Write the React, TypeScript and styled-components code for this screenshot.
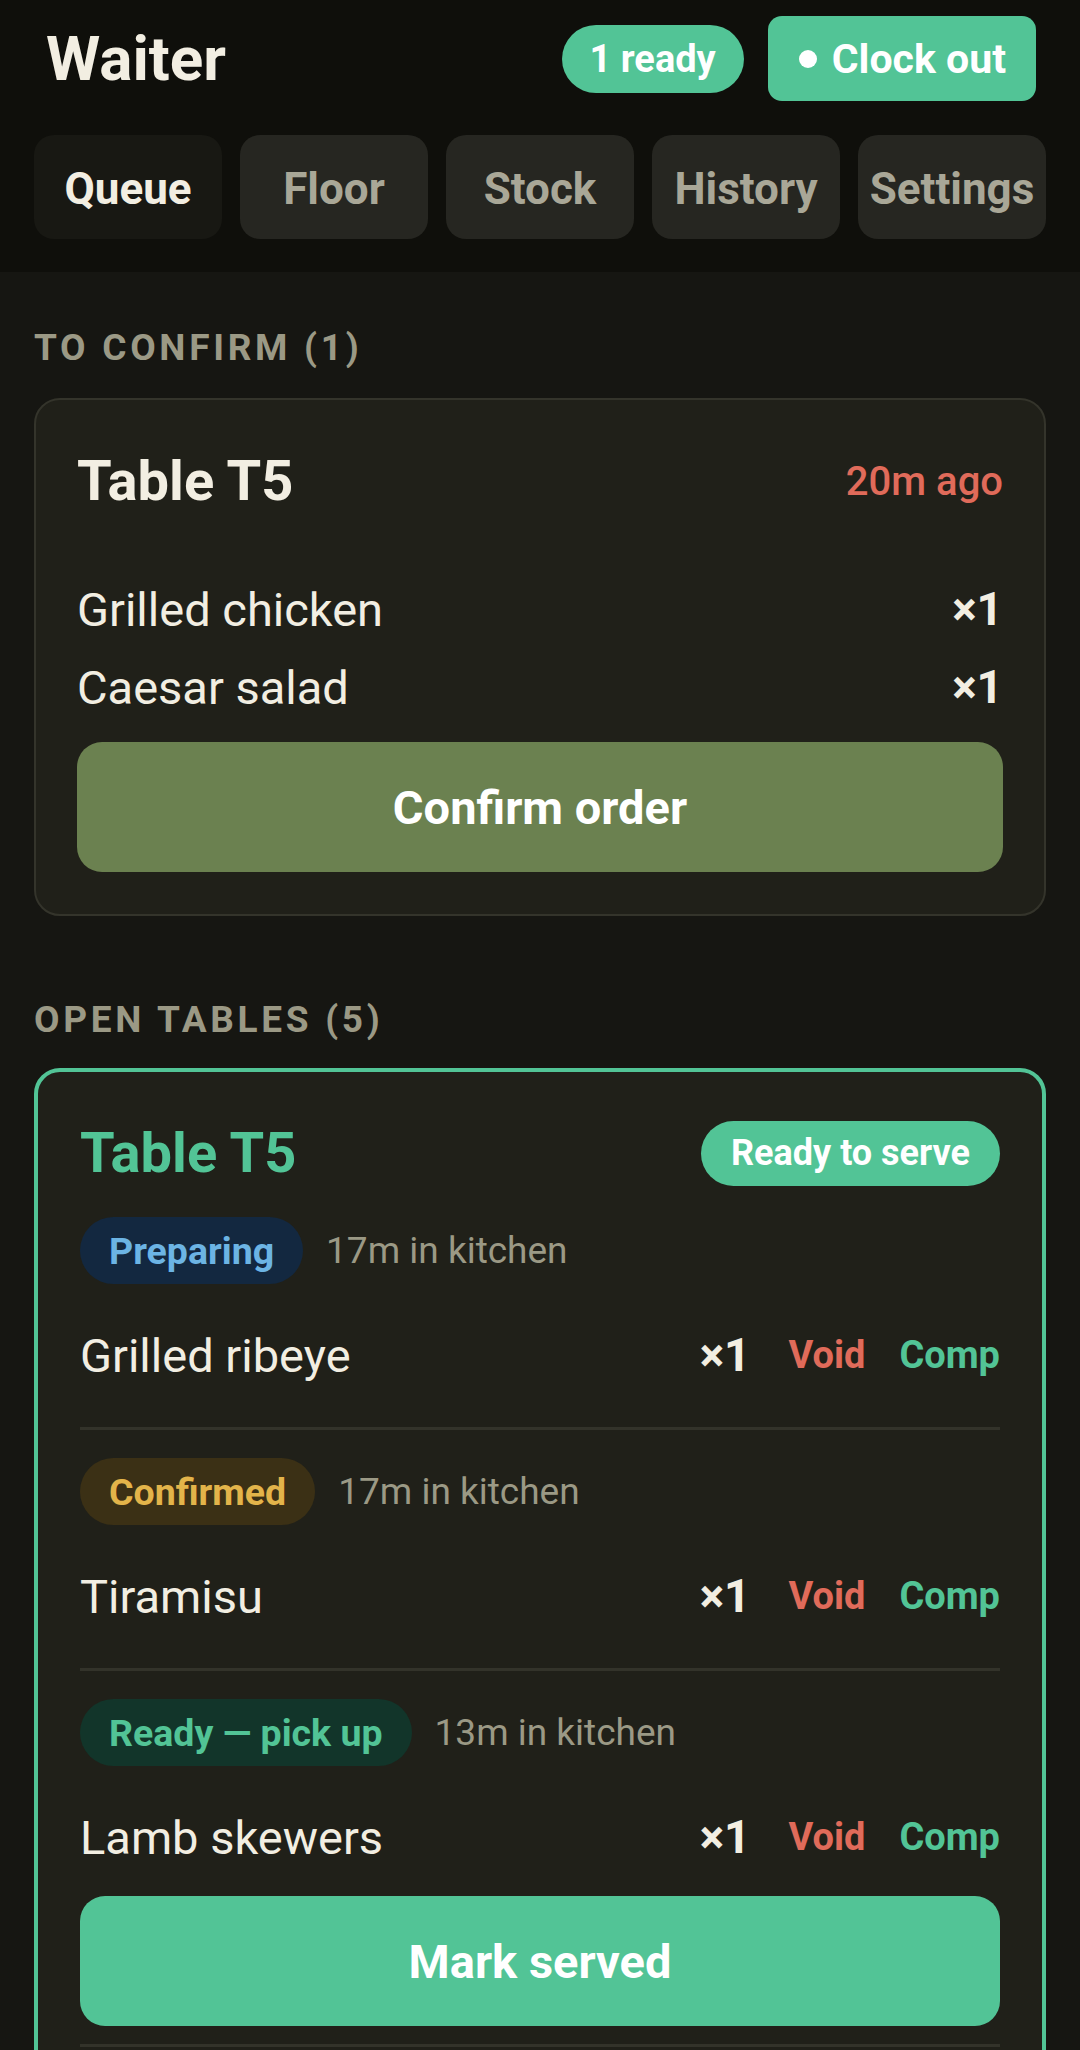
import React from 'react';
import styled, { createGlobalStyle } from 'styled-components';

// ========== Global ==========

const GlobalStyle = createGlobalStyle`
  html, body {
    margin: 0;
    padding: 0;
    background: #161612;
  }
  body {
    font-family: Roboto, "Liberation Sans", Arial, sans-serif;
    color: #f2eee2;
  }
  * {
    box-sizing: border-box;
  }
`;

// ========== Styled Components ==========

const Page = styled.div`
  width: 1080px;
  min-height: 2050px;
  background: #161612;
`;

const Header = styled.header`
  background: #0f0f0b;
  padding: 16px 34px 33px;
`;

const TitleRow = styled.div`
  display: flex;
  align-items: center;
  justify-content: space-between;
  height: 85px;
  padding: 0 10px 0 12px;
`;

const Title = styled.h1`
  margin: 0;
  font-size: 62px;
  font-weight: 700;
  color: #f2eee2;
`;

const HeaderActions = styled.div`
  display: flex;
  align-items: center;
  gap: 24px;
`;

const ReadyPill = styled.span`
  display: inline-flex;
  align-items: center;
  height: 68px;
  padding: 0 28px;
  border-radius: 34px;
  background: #52c496;
  color: #fff;
  font-size: 38px;
  font-weight: 700;
`;

const ClockOut = styled.button`
  display: inline-flex;
  align-items: center;
  gap: 15px;
  height: 85px;
  padding: 0 30px 0 31px;
  border: none;
  border-radius: 14px;
  background: #52c496;
  color: #fff;
  font-family: inherit;
  font-size: 41px;
  font-weight: 700;
`;

const Dot = styled.span`
  width: 18px;
  height: 18px;
  border-radius: 50%;
  background: #fff;
`;

const Tabs = styled.nav`
  display: grid;
  grid-template-columns: repeat(5, 1fr);
  gap: 18px;
  margin-top: 34px;
`;

const Tab = styled.button<{ $active?: boolean }>`
  height: 104px;
  border: none;
  border-radius: 20px;
  padding: 4px 0 0;
  background: ${(p) => (p.$active ? '#181813' : '#262621')};
  color: ${(p) => (p.$active ? '#f2eee2' : '#a9a797')};
  font-family: inherit;
  font-size: 44px;
  font-weight: 700;
  white-space: nowrap;
`;

const Main = styled.main`
  padding: 54px 34px 0;
`;

const SectionLabel = styled.h2<{ $spaced?: boolean }>`
  margin: ${(p) => (p.$spaced ? '82px' : '0')} 0 ${(p) => (p.$spaced ? '26px' : '28px')};
  font-size: 37px;
  line-height: 44px;
  font-weight: 700;
  letter-spacing: 0.1em;
  text-transform: uppercase;
  color: #9b9985;
`;

const Card = styled.section<{ $ready?: boolean }>`
  background: #202019;
  border: ${(p) => (p.$ready ? '4px solid #52c496' : '2px solid #34342b')};
  border-radius: 26px;
  padding: ${(p) => (p.$ready ? '46px 42px 0' : '41px 41px 42px')};
`;

const CardHead = styled.div<{ $h: number }>`
  display: flex;
  align-items: center;
  justify-content: space-between;
  height: ${(p) => p.$h}px;
`;

const TableName = styled.h3<{ $ready?: boolean }>`
  margin: 0;
  font-size: 56px;
  font-weight: 700;
  color: ${(p) => (p.$ready ? '#52c496' : '#f2eee2')};
`;

const Age = styled.span`
  font-size: 40px;
  font-weight: 500;
  color: #e06b5a;
`;

const ServePill = styled.span`
  display: inline-flex;
  align-items: center;
  height: 65px;
  padding: 0 30px;
  border-radius: 33px;
  background: #52c496;
  color: #fff;
  font-size: 36px;
  font-weight: 700;
`;

const ItemList = styled.div`
  margin-top: 49px;
`;

const ItemRow = styled.div<{ $h: number }>`
  display: flex;
  align-items: center;
  justify-content: space-between;
  height: ${(p) => p.$h}px;
  font-size: 47px;
  color: #f2eee2;
`;

const Qty = styled.span`
  font-weight: 700;
  font-size: 46px;
`;

const RowRight = styled.div`
  display: flex;
  align-items: center;
`;

const Action = styled.button<{ $kind: 'void' | 'comp' }>`
  border: none;
  background: none;
  padding: 0;
  margin-left: ${(p) => (p.$kind === 'void' ? '38px' : '34px')};
  font-family: inherit;
  font-size: 38px;
  font-weight: 700;
  color: ${(p) => (p.$kind === 'void' ? '#e06b5a' : '#52c496')};
`;

const BigButton = styled.button<{ $tone: 'olive' | 'green' }>`
  display: block;
  width: 100%;
  height: 130px;
  border: none;
  border-radius: 25px;
  background: ${(p) => (p.$tone === 'olive' ? '#6b8150' : '#52c496')};
  color: #fff;
  font-family: inherit;
  font-size: 47px;
  font-weight: 700;
`;

const Block = styled.div<{ $first?: boolean; $last?: boolean }>`
  padding: ${(p) => (p.$first ? '29px' : '28px')} 0 ${(p) => (p.$last ? '18px' : '44px')};
  border-bottom: 3px solid #33332a;
`;

const Meta = styled.div`
  display: flex;
  align-items: center;
  gap: 23px;
  height: 67px;
  margin-bottom: 43px;
`;

const statusColors = {
  preparing: { bg: '#132840', fg: '#6cb4e4' },
  confirmed: { bg: '#3b3015', fg: '#e3b44a' },
  ready: { bg: '#12352a', fg: '#52c496' },
};

type Status = keyof typeof statusColors;

const Badge = styled.span<{ $status: Status }>`
  display: inline-flex;
  align-items: center;
  height: 67px;
  padding: 0 29px;
  border-radius: 34px;
  background: ${(p) => statusColors[p.$status].bg};
  color: ${(p) => statusColors[p.$status].fg};
  font-size: 37.5px;
  font-weight: 700;
  white-space: nowrap;
`;

const MetaText = styled.span`
  font-size: 37px;
  color: #9b9985;
`;

const ButtonWrap = styled.div<{ $gap: number }>`
  margin-top: ${(p) => p.$gap}px;
`;

const Tail = styled.div`
  height: 200px;
`;

// ========== Data ==========

const toConfirm = [
  { name: 'Grilled chicken', qty: 1 },
  { name: 'Caesar salad', qty: 1 },
];

const openItems: { status: Status; label: string; time: string; name: string }[] = [
  { status: 'preparing', label: 'Preparing', time: '17m in kitchen', name: 'Grilled ribeye' },
  { status: 'confirmed', label: 'Confirmed', time: '17m in kitchen', name: 'Tiramisu' },
  { status: 'ready', label: 'Ready — pick up', time: '13m in kitchen', name: 'Lamb skewers' },
];

const tabs = ['Queue', 'Floor', 'Stock', 'History', 'Settings'];

// ========== Page ==========

export default function App() {
  return (
    <Page>
      <GlobalStyle />
      <Header>
        <TitleRow>
          <Title>Waiter</Title>
          <HeaderActions>
            <ReadyPill>1 ready</ReadyPill>
            <ClockOut>
              <Dot />
              Clock out
            </ClockOut>
          </HeaderActions>
        </TitleRow>
        <Tabs>
          {tabs.map((t) => (
            <Tab key={t} $active={t === 'Queue'}>
              {t}
            </Tab>
          ))}
        </Tabs>
      </Header>

      <Main>
        <SectionLabel>To confirm (1)</SectionLabel>
        <Card>
          <CardHead $h={80}>
            <TableName>Table T5</TableName>
            <Age>20m ago</Age>
          </CardHead>
          <ItemList>
            {toConfirm.map((it) => (
              <ItemRow key={it.name} $h={78}>
                <span>{it.name}</span>
                <Qty>×{it.qty}</Qty>
              </ItemRow>
            ))}
          </ItemList>
          <ButtonWrap $gap={16}>
            <BigButton $tone="olive">Confirm order</BigButton>
          </ButtonWrap>
        </Card>

        <SectionLabel $spaced>Open tables (5)</SectionLabel>
        <Card $ready>
          <CardHead $h={70}>
            <TableName $ready>Table T5</TableName>
            <ServePill>Ready to serve</ServePill>
          </CardHead>
          {openItems.map((it, i) => (
            <Block key={it.name} $first={i === 0} $last={i === openItems.length - 1}>
              <Meta>
                <Badge $status={it.status}>{it.label}</Badge>
                <MetaText>{it.time}</MetaText>
              </Meta>
              <ItemRow $h={56}>
                <span>{it.name}</span>
                <RowRight>
                  <Qty>×1</Qty>
                  <Action $kind="void">Void</Action>
                  <Action $kind="comp">Comp</Action>
                </RowRight>
              </ItemRow>
              {i === openItems.length - 1 && (
                <ButtonWrap $gap={31}>
                  <BigButton $tone="green">Mark served</BigButton>
                </ButtonWrap>
              )}
            </Block>
          ))}
          <Tail />
        </Card>
      </Main>
    </Page>
  );
}
